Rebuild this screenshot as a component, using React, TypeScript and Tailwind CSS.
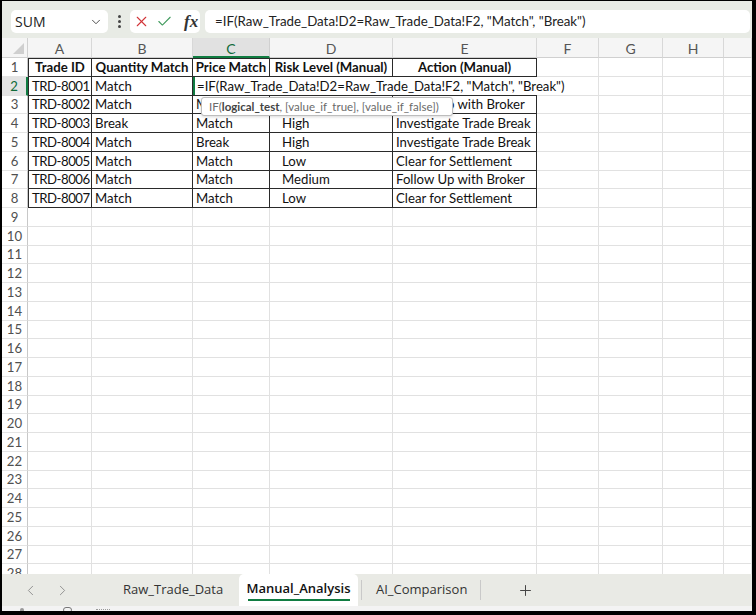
import { Check, ChevronDown, ChevronLeft, ChevronRight, Plus, X } from "lucide-react";

const cellFont = { fontFamily: "Lato, 'Liberation Sans', sans-serif" };

const colWidths = [26, 64, 101, 77, 123, 144, 62, 64, 61, 28];
const letters = ["", "A", "B", "C", "D", "E", "F", "G", "H", ""];

const table: string[][] = [
  ["Trade ID", "Quantity Match", "Price Match", "Risk Level (Manual)", "Action (Manual)"],
  ["TRD-8001", "Match", "", "", ""],
  ["TRD-8002", "Match", "Match", "Medium", "Follow Up with Broker"],
  ["TRD-8003", "Break", "Match", "High", "Investigate Trade Break"],
  ["TRD-8004", "Match", "Break", "High", "Investigate Trade Break"],
  ["TRD-8005", "Match", "Match", "Low", "Clear for Settlement"],
  ["TRD-8006", "Match", "Match", "Medium", "Follow Up with Broker"],
  ["TRD-8007", "Match", "Match", "Low", "Clear for Settlement"],
];

const FORMULA = '=IF(Raw_Trade_Data!D2=Raw_Trade_Data!F2, "Match", "Break")';

function Cell({ row, col }: { row: number; col: number }) {
  const w = colWidths[col];
  const inTable = row <= 8 && col >= 1 && col <= 5;
  const text = inTable ? table[row - 1][col - 1] : "";

  let cls = "h-full shrink-0 flex items-center pt-[2px] whitespace-nowrap border-r border-b border-[#e1e1e1]";
  if (inTable) {
    cls = "h-full shrink-0 flex items-center pt-[2px] whitespace-nowrap border-r border-b border-[#2a2a2a]";
    if (col === 1 && row === 1) cls += " border-l border-t";
    else if (col === 1) cls += " border-l tracking-[-0.5px]";
    else if (row === 1) cls += " border-t";
  }
  if (row === 1 && inTable) cls += " justify-center font-bold";
  else if (col === 4) cls += " pl-[12px]";
  else cls += " pl-[3px]";

  return (
    <div className={cls} style={{ width: w }}>
      {text}
    </div>
  );
}

function GridRow({ row }: { row: number }) {
  const active = row === 2;
  return (
    <div className="flex h-[18.75px] shrink-0">
      <div
        className={
          active
            ? "w-[26px] h-full shrink-0 flex items-center justify-center pt-[2px] bg-[#e3e3e3] text-[#0f6b3a] border-r-2 border-r-[#107c41] border-b border-b-[#e1e1e1]"
            : "w-[26px] h-full shrink-0 flex items-center justify-center pt-[2px] bg-white text-[#505050] border-r border-r-[#c8c8c8] border-b border-b-[#e4e4e4]"
        }
      >
        {row}
      </div>
      {colWidths.slice(1).map((_, i) => (
        <Cell key={i} row={row} col={i + 1} />
      ))}
    </div>
  );
}

function FormulaBar() {
  return (
    <div className="h-[37px] shrink-0 bg-[#e8ebe5] flex items-center pt-[4px] pl-[9px] pr-[2px] gap-0">
      <div className="w-[97px] h-[23px] bg-white rounded-[5px] flex items-center justify-between pl-[4px] pr-[5px] text-[14px] text-[#222]" style={{ fontFamily: "'Open Sans', sans-serif" }}>
        <span>SUM</span>
        <ChevronDown size={14} strokeWidth={1.6} className="text-[#444]" />
      </div>
      <div className="w-[22px] flex flex-col items-center gap-[2px]">
        <span className="w-[3px] h-[3px] rounded-full bg-[#444]" />
        <span className="w-[3px] h-[3px] rounded-full bg-[#444]" />
        <span className="w-[3px] h-[3px] rounded-full bg-[#444]" />
      </div>
      <div className="w-[70px] h-[23px] bg-white rounded-[5px] flex items-center pl-[3px] gap-[6px]">
        <X size={17} strokeWidth={1.5} className="text-[#d13438]" />
        <Check size={17} strokeWidth={1.5} className="text-[#3f9a5c]" />
        <span className="ml-[5px] text-[17px] italic font-bold text-[#333] leading-none" style={{ fontFamily: "'Liberation Serif', serif" }}>
          fx
        </span>
      </div>
      <div className="ml-[5px] flex-1 h-[23px] bg-white rounded-[5px] flex items-center pl-[10px] text-[13.3px] text-[#222] whitespace-nowrap" style={cellFont}>
        {FORMULA}
      </div>
    </div>
  );
}

function ColumnHeaders() {
  return (
    <div className="flex h-[20px] shrink-0 bg-[#f5f5f5] text-[14px]">
      <div className="w-[26px] h-full shrink-0 relative border-r border-b border-[#d0d0d0]">
        <div className="absolute right-[3px] bottom-[3px] w-0 h-0 border-l-[11px] border-l-transparent border-b-[11px] border-b-[#cfcfcf]" />
      </div>
      {letters.slice(1).map((l, i) => (
        <div
          key={i}
          className={
            l === "C"
              ? "h-full shrink-0 flex items-center justify-center pt-[2px] bg-[#e1e1e1] text-[#0f6b3a] border-r border-r-[#d0d0d0] border-b-2 border-b-[#107c41]"
              : "h-full shrink-0 flex items-center justify-center pt-[2px] text-[#555] border-r border-r-[#d8d8d8] border-b border-b-[#d0d0d0]"
          }
          style={{ width: colWidths[i + 1] }}
        >
          {l}
        </div>
      ))}
    </div>
  );
}

function SheetTabs() {
  const tabFont = { fontFamily: "'Open Sans', sans-serif" };
  return (
    <div className="h-[32px] shrink-0 bg-[#e9eae5] flex items-end text-[13px] text-[#333]" style={tabFont}>
      <div className="h-full flex items-center pl-[20px] gap-[15px] text-[#8c8c8c]">
        <ChevronLeft size={17} strokeWidth={1.3} />
        <ChevronRight size={17} strokeWidth={1.3} />
      </div>
      <div className="h-full flex items-center ml-[52px] w-[116px]">Raw_Trade_Data</div>
      <div className="h-[32px] w-[119px] bg-white rounded-t-[5px] flex flex-col items-center justify-center font-semibold text-[#111]">
        <span className="leading-[18px]">Manual_Analysis</span>
        <span className="w-[102px] h-[2px] bg-[#107c41] mt-[2px]" />
      </div>
      <div className="h-full flex items-center">
        <span className="w-px h-[20px] bg-[#c9c9c9] ml-[3px]" />
        <span className="ml-[14px] w-[104px]">AI_Comparison</span>
        <span className="w-px h-[20px] bg-[#c9c9c9]" />
      </div>
      <div className="h-full flex items-center ml-[36px] text-[#444]">
        <Plus size={17} strokeWidth={1.4} />
      </div>
    </div>
  );
}

export default function App() {
  const rows = Array.from({ length: 29 }, (_, i) => i + 1);
  return (
    <div className="w-[756px] h-[615px] bg-black pt-px pl-[2px] pr-[4px] pb-[4px]">
      <div className="w-full h-full flex flex-col bg-white overflow-hidden">
        <FormulaBar />
        <div className="relative h-[536px] shrink-0 overflow-hidden text-[13.2px] text-[#111]" style={cellFont}>
          <ColumnHeaders />
          {rows.map((r) => (
            <GridRow key={r} row={r} />
          ))}

          {/* in-cell edit of C2 */}
          <div className="absolute left-[191px] top-[38.75px] w-[382px] h-[17.75px] bg-white border-l-2 border-l-[#107c41] flex items-center pt-[2px] pl-[2px] whitespace-nowrap text-[#111]">
            {FORMULA}
          </div>

          {/* function tooltip */}
          <div className="absolute left-[199px] top-[59px] w-[252px] h-[19px] bg-white border border-[#bdbdbd] rounded-[3px] shadow-[0_1px_3px_rgba(0,0,0,0.15)] flex items-center pt-px pl-[7px] text-[11.5px] text-[#6a6a6a] whitespace-nowrap" style={cellFont}>
            IF(<span className="font-bold text-[#444]">logical_test</span>, [value_if_true], [value_if_false])
          </div>
        </div>
        <SheetTabs />
        <div className="h-[5px] shrink-0 bg-[#f3f3f3] relative overflow-hidden">
          <span className="absolute left-[18px] top-[2px] w-[4px] h-[3px] bg-[#9a9a9a] rounded-t-sm" />
          <span className="absolute left-[61px] top-[1px] w-[9px] h-[6px] border border-[#777] rounded-full" />
          <span className="absolute left-[94px] top-[3px] w-[14px] h-[2px] border-t border-dotted border-[#999]" />
        </div>
      </div>
    </div>
  );
}
